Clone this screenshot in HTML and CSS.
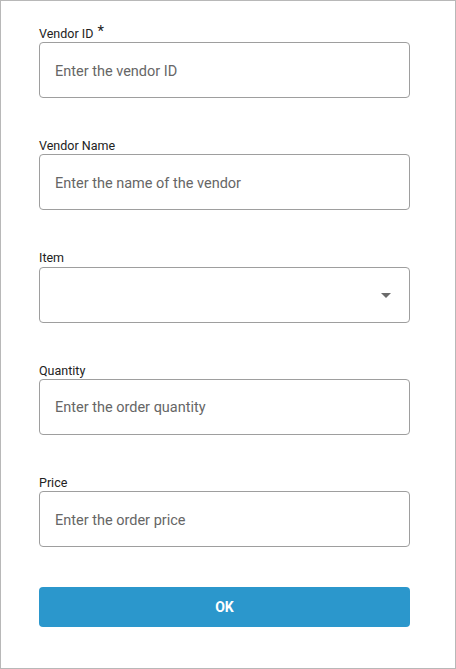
FILE: index.html
```html
<!DOCTYPE html>
<html>
<head>
<meta charset="utf-8">
<link rel="stylesheet" href="styles.css">
</head>
<body>
<form class="panel">
  <div class="field">
    <label class="label">Vendor ID <span class="req">*</span></label>
    <div class="input"><span class="placeholder">Enter the vendor ID</span></div>
  </div>
  <div class="field">
    <label class="label">Vendor Name</label>
    <div class="input"><span class="placeholder">Enter the name of the vendor</span></div>
  </div>
  <div class="field">
    <label class="label">Item</label>
    <div class="input select"><span class="placeholder"></span><span class="caret"></span></div>
  </div>
  <div class="field">
    <label class="label">Quantity</label>
    <div class="input"><span class="placeholder">Enter the order quantity</span></div>
  </div>
  <div class="field">
    <label class="label">Price</label>
    <div class="input"><span class="placeholder">Enter the order price</span></div>
  </div>
  <button type="button" class="ok">OK</button>
</form>
</body>
</html>
```
FILE: styles.css
```css
html, body {
  margin: 0;
  padding: 0;
  background: #ffffff;
}
body {
  font-family: Roboto, "Liberation Sans", sans-serif;
}
.panel {
  box-sizing: border-box;
  width: 456px;
  height: 669px;
  border: 1px solid #b8b8b8;
  padding: 24.75px 45px 0 38px;
  display: flex;
  flex-direction: column;
  gap: 40px;
}
.field {
  display: flex;
  flex-direction: column;
}
.label {
  display: block;
  box-sizing: border-box;
  height: 16.25px;
  padding-top: 1px;
  font-size: 12.5px;
  line-height: 14.25px;
  color: #222222;
}
.req {
  font-size: 15px;
  line-height: 0;
  position: relative;
  top: -2px;
  margin-left: 1px;
  color: #222;
}
.input {
  box-sizing: border-box;
  height: 56px;
  border: 1px solid #9e9e9e;
  border-radius: 4px;
  display: flex;
  align-items: center;
  padding: 2px 16px 0 15px;
}
.placeholder {
  font-size: 14.5px;
  color: #666666;
  flex: 1;
}
.caret {
  width: 0;
  height: 0;
  border-left: 5px solid transparent;
  border-right: 5px solid transparent;
  border-top: 5px solid #6b6b6b;
  margin-right: 2px;
  margin-bottom: 1px;
}
.ok {
  height: 40px;
  border: none;
  border-radius: 4px;
  background: #2b97cc;
  color: #ffffff;
  font-family: Roboto, "Liberation Sans", sans-serif;
  font-size: 14px;
  font-weight: 700;
  padding: 0;
}
```
